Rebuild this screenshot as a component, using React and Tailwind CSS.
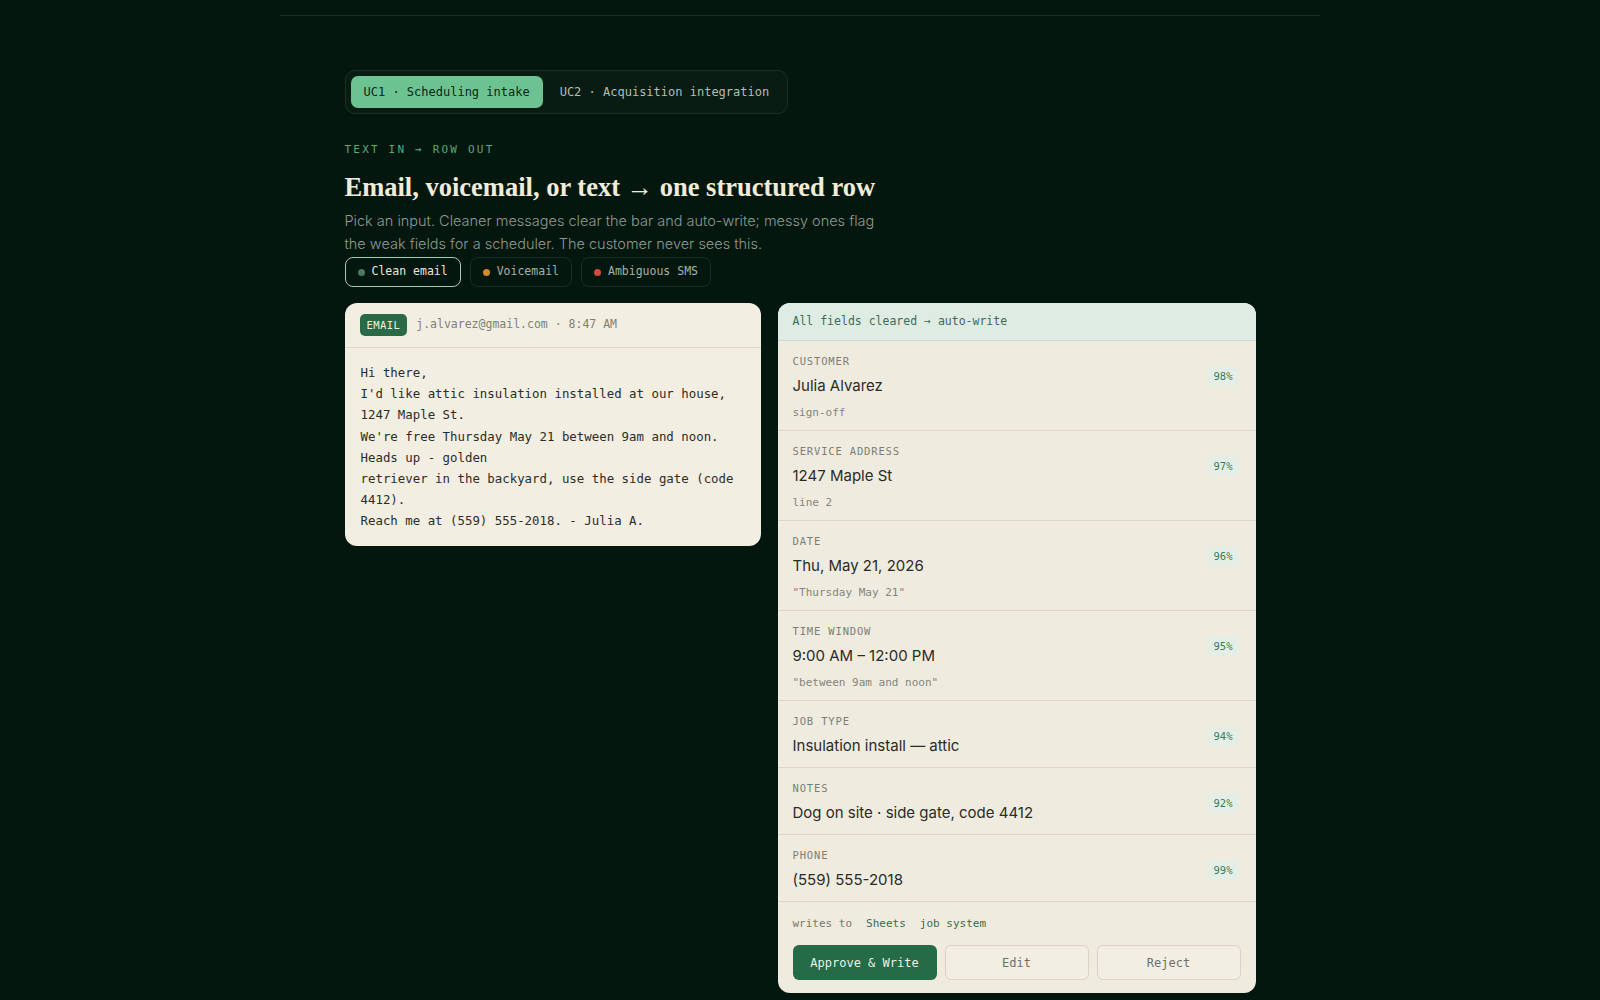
import React from "react";

const mono = { fontFamily: '"DejaVu Sans Mono", "Liberation Mono", monospace' };

const fields = [
  { label: "Customer", value: "Julia Alvarez", note: "sign-off", pct: "98%" },
  { label: "Service address", value: "1247 Maple St", note: "line 2", pct: "97%" },
  { label: "Date", value: "Thu, May 21, 2026", note: '"Thursday May 21"', pct: "96%" },
  { label: "Time window", value: "9:00 AM – 12:00 PM", note: '"between 9am and noon"', pct: "95%" },
  { label: "Job type", value: "Insulation install — attic", pct: "94%" },
  { label: "Notes", value: "Dog on site · side gate, code 4412", pct: "92%" },
  { label: "Phone", value: "(559) 555-2018", pct: "99%" },
];

const emailBody = `Hi there,
I'd like attic insulation installed at our house, 1247 Maple St.
We're free Thursday May 21 between 9am and noon. Heads up - golden
retriever in the backyard, use the side gate (code 4412).
Reach me at (559) 555-2018. - Julia A.`;

const FieldRow = ({ field }) => (
  <div className="border-b border-[#dcd6c8] pl-[15px] pr-[17px] pt-[13px] pb-[10px]">
    <div className="flex items-center justify-between">
      <div>
        <div className="text-[10.5px] leading-[14px] uppercase tracking-[0.08em] text-[#7c7e75]" style={mono}>
          {field.label}
        </div>
        <div className="mt-[7px] text-[15px] leading-[22px] text-[#2a2c27]">{field.value}</div>
      </div>
      <span className="rounded bg-[#e5eee6] px-[6px] py-[3px] text-[10.5px] leading-[14px] text-[#3b7a57]" style={mono}>
        {field.pct}
      </span>
    </div>
    {field.note && (
      <div className="mt-[9px] text-[11px] leading-[14px] text-[#84867c]" style={mono}>
        {field.note}
      </div>
    )}
  </div>
);

export default function App() {
  return (
    <div className="min-h-screen bg-[#04170f]" style={{ fontFamily: "Inter, 'Noto Sans', sans-serif" }}>
      <div className="mx-auto h-[16px] w-[1040px] border-b border-[#1a2e22]" />

      <div className="mx-auto w-[911px] pt-[54px]">
        {/* use-case tabs */}
        <div className="inline-flex gap-[4px] rounded-[10px] border border-[#1c3024] bg-[#081c13] p-[5px]" style={mono}>
          <button className="h-[32px] rounded-[7px] bg-[#6cc290] px-[13px] text-[12px] text-[#0d2518]">
            UC1 · Scheduling intake
          </button>
          <button className="h-[32px] rounded-[7px] px-[13px] text-[12px] text-[#b4bcb3]">
            UC2 · Acquisition integration
          </button>
        </div>

        <div className="mt-[29px] text-[11px] leading-[14px] tracking-[0.2em] text-[#5fa57d]" style={mono}>
          TEXT IN → ROW OUT
        </div>
        <h1
          className="mt-[13px] text-[26.5px] leading-[34px] font-semibold text-[#f1ebda]"
          style={{ fontFamily: '"Liberation Serif", "DejaVu Serif", serif' }}
        >
          Email, voicemail, or text → one structured row
        </h1>
        <p className="mt-[6px] w-[545px] text-[14.5px] leading-[22.5px] font-light text-[#8f9a91]">
          Pick an input. Cleaner messages clear the bar and auto-write; messy ones flag the weak fields for a scheduler. The customer never sees this.
        </p>

        {/* sample inputs */}
        <div className="mt-[2px] flex gap-[9px]" style={mono}>
          <button className="flex h-[30px] items-center gap-[7px] rounded-lg border border-[#9fcdb1] px-3 text-[11.5px] text-[#ece7d8]">
            <span className="h-[7px] w-[7px] rounded-full bg-[#4b7a5e]" />
            Clean email
          </button>
          <button className="flex h-[30px] items-center gap-[7px] rounded-lg border border-[#1a2d21] px-3 text-[11.5px] text-[#a8b0a6]">
            <span className="h-[7px] w-[7px] rounded-full bg-[#d38a2b]" />
            Voicemail
          </button>
          <button className="flex h-[30px] items-center gap-[7px] rounded-lg border border-[#1a2d21] px-3 text-[11.5px] text-[#a8b0a6]">
            <span className="h-[7px] w-[7px] rounded-full bg-[#d64a3c]" />
            Ambiguous SMS
          </button>
        </div>

        <div className="mt-[16px] flex items-start gap-[17px]">
          {/* source message */}
          <div className="w-[416px] overflow-hidden rounded-xl bg-[#f3eee2]">
            <div className="flex h-[45px] items-center gap-[9px] border-b border-[#ddd6c7] px-[15px]" style={mono}>
              <span className="rounded-[5px] bg-[#2a6a47] px-[7px] py-[4px] text-[10.5px] leading-[14px] tracking-[0.04em] text-[#eef0e2]">
                EMAIL
              </span>
              <span className="text-[11.5px] text-[#7e8077]">j.alvarez@gmail.com · 8:47 AM</span>
            </div>
            <div
              className="whitespace-pre-wrap px-[16px] pt-[14px] pb-[14px] text-[12.4px] leading-[21.2px] text-[#2b2d28]"
              style={mono}
            >
              {emailBody}
            </div>
          </div>

          {/* extracted row */}
          <div className="w-[478px] overflow-hidden rounded-xl bg-[#efebdf]">
            <div className="flex h-[38px] items-center border-b border-[#cfd9cf] bg-[#deece4] px-[15px] text-[11.5px] text-[#3e6a53]" style={mono}>
              All fields cleared → auto-write
            </div>
            {fields.map((f) => (
              <FieldRow key={f.label} field={f} />
            ))}
            <div className="px-[15px] pt-[14px] pb-[13px]" style={mono}>
              <div className="flex gap-[14px] text-[11px] leading-[16px]">
                <span className="text-[#76786f]">writes to</span>
                <span className="text-[#3c6a52]">Sheets</span>
                <span className="text-[#3c6a52]">job system</span>
              </div>
              <div className="mt-[13px] grid grid-cols-3 gap-[8px]">
                <button className="h-[35px] rounded-md bg-[#256b47] text-[12px] text-[#eef0e3]">Approve &amp; Write</button>
                <button className="h-[35px] rounded-md border border-[#d9d3c4] bg-[#f2eee4] text-[12px] text-[#6f7169]">Edit</button>
                <button className="h-[35px] rounded-md border border-[#d9d3c4] bg-[#f2eee4] text-[12px] text-[#6f7169]">Reject</button>
              </div>
            </div>
          </div>
        </div>
      </div>
    </div>
  );
}
